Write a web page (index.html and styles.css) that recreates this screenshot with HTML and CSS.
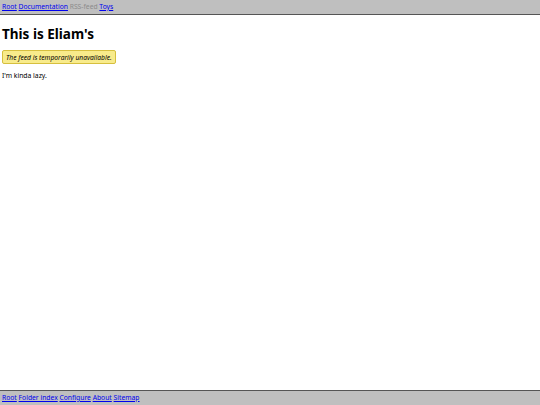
FILE: index.html
```html
<!DOCTYPE html>
<html>
<head>
<meta charset="utf-8">
<link rel="stylesheet" href="styles.css">
</head>
<body>
<div class="page">
  <nav class="bar top">
    <a href="#">Root</a> <a href="#">Documentation</a> <span class="disabled">RSS-feed</span> <a href="#">Toys</a>
  </nav>
  <main class="content">
    <h1 class="title">This is Eliam's</h1>
    <div class="notice"><em>The feed is temporarily unavailable.</em></div>
    <p class="text">I'm kinda lazy.</p>
  </main>
  <nav class="bar bottom">
    <a href="#">Root</a> <a href="#">Folder index</a> <a href="#">Configure</a> <a href="#">About</a> <a href="#">Sitemap</a>
  </nav>
</div>
</body>
</html>
```
FILE: styles.css
```css
html, body {
  margin: 0;
  padding: 0;
  height: 100%;
}
body {
  font-family: "Noto Sans", "Open Sans", sans-serif;
  font-size: 6.8px;
  color: #000;
  background: #fff;
}
.page {
  display: flex;
  flex-direction: column;
  height: 100%;
}
.bar {
  background: #bfbfbf;
  padding: 2px 2px;
  font-size: 6.75px;
  line-height: 10px;
}
.bar a {
  color: #0000ee;
}
.top {
  border-bottom: 1px solid #555;
}
.bottom {
  border-top: 1px solid #555;
}
.disabled {
  color: #8c8c8c;
}
.content {
  flex: 1;
  padding: 0 2px;
}
.title {
  font-size: 13.5px;
  font-weight: bold;
  margin: 11px 0 8px;
  line-height: 16px;
}
.notice {
  display: inline-block;
  background: #f8eb8b;
  border: 1px solid #d6bf3e;
  border-radius: 2px;
  padding: 1.5px 3px;
  font-size: 6.7px;
  line-height: 9px;
}
.text {
  margin: 7px 0;
  line-height: 10px;
}
```
